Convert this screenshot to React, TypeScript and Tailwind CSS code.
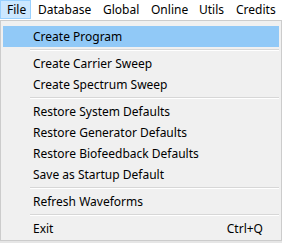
const menuBar = [
  { label: "File", w: "w-[31px]", pl: "pl-[6px]", active: true },
  { label: "Database", w: "w-[65px]", pl: "pl-[7px]" },
  { label: "Global", w: "w-[49px]", pl: "pl-[7px]" },
  { label: "Online", w: "w-[47px]", pl: "pl-[6px]" },
  { label: "Utils", w: "w-[37px]", pl: "pl-[7px]" },
  { label: "Credits", w: "w-[53px]", pl: "pl-[7px]" },
];

type Entry = { label?: string; shortcut?: string; active?: boolean; sep?: boolean };

const items: Entry[] = [
  { label: "Create Program", active: true },
  { sep: true },
  { label: "Create Carrier Sweep" },
  { label: "Create Spectrum Sweep" },
  { sep: true },
  { label: "Restore System Defaults" },
  { label: "Restore Generator Defaults" },
  { label: "Restore Biofeedback Defaults" },
  { label: "Save as Startup Default" },
  { sep: true },
  { label: "Refresh Waveforms" },
  { sep: true },
  { label: "Exit", shortcut: "Ctrl+Q" },
];

export default function App() {
  return (
    <div
      className="w-[282px] h-[243px] overflow-hidden bg-white text-[12px] text-black"
      style={{ fontFamily: '"Noto Sans", "Liberation Sans", sans-serif' }}
    >
      {/* menu bar */}
      <div className="flex h-[20px] bg-white">
        {menuBar.map((m) => (
          <div
            key={m.label}
            className={`${m.w} ${m.pl} flex items-center h-[19px] leading-none ${
              m.active ? "bg-[#cce8ff] border border-[#99d1ff] pl-[5px]" : ""
            }`}
          >
            {m.label}
          </div>
        ))}
      </div>

      {/* dropdown */}
      <div className="w-[282px] border border-[#cccccc] bg-[#f0f0f0] px-[2px] pt-[5px] pb-[1px]">
        {items.map((it, i) =>
          it.sep ? (
            <div key={i} className="h-[6px] flex flex-col justify-center pl-[27px]">
              <div className="h-px bg-[#d7d7d7]" />
              <div className="h-px bg-white" />
            </div>
          ) : (
            <div
              key={i}
              className={`h-[21px] flex items-center justify-between pl-[30px] pr-[16px] leading-none ${
                it.active ? "bg-[#91c9f7]" : ""
              }`}
            >
              <span>{it.label}</span>
              {it.shortcut && <span>{it.shortcut}</span>}
            </div>
          )
        )}
      </div>
      <div className="h-[3px] bg-[#e6e6e6]" />
    </div>
  );
}
